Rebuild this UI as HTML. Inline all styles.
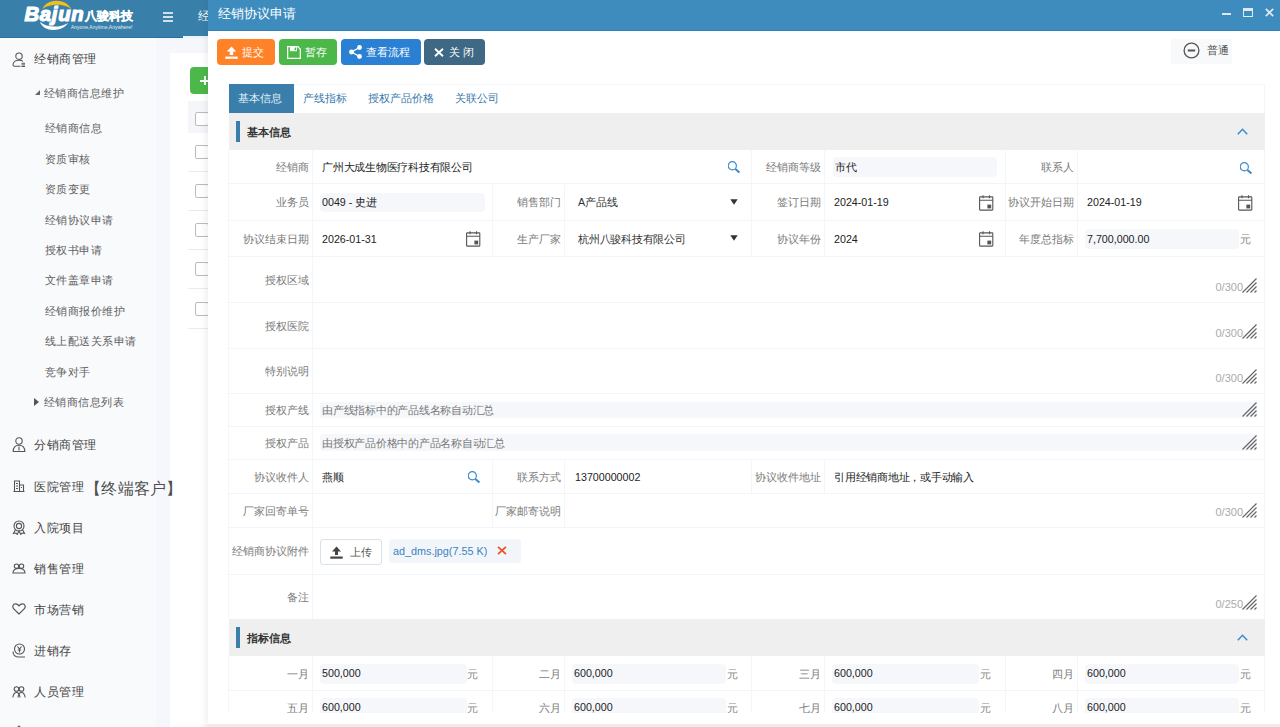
<!DOCTYPE html>
<html><head><meta charset="utf-8">
<style>
*{box-sizing:border-box;margin:0;padding:0}
html,body{width:1280px;height:727px;overflow:hidden}
body{position:relative;background:#f5f7fc;font-family:"Liberation Sans",sans-serif;color:#333}
.a{position:absolute;white-space:nowrap}
#hdr{left:0;top:0;width:1280px;height:38px;background:#3880aa;border-bottom:1px solid #2672a2}
#side{left:0;top:38px;width:156px;height:689px;background:#f9fafc}
.mi{font-size:12px;letter-spacing:.55px;color:#444;line-height:16px}
.si{font-size:11px;letter-spacing:.45px;color:#606060;line-height:14px}
.ic{position:absolute}
#panel{left:170px;top:53px;width:60px;height:680px;background:#fff}
#modal{left:208px;top:0;width:1072px;height:724px;background:#fff;box-shadow:-3px 0 6px rgba(0,0,0,.06)}
#mtitle{left:0;top:0;width:1072px;height:31px;background:#3d8cbd;border-bottom:1px solid #3282b6}
.btn{position:absolute;top:39px;height:26px;border-radius:4px;color:#fff;font-size:11.5px;line-height:26px}
.lbl{position:absolute;margin-top:1px;font-size:11px;color:#7a7a7a;text-align:right;line-height:14px;white-space:nowrap}
.val{position:absolute;margin-top:1px;font-size:10.7px;color:#222;line-height:14px;white-space:nowrap}
.inp{position:absolute;background:#f5f7fb;border-radius:4px}
.hl{position:absolute;height:1px;background:#f1f4f8}
.vl{position:absolute;width:1px;background:#f2f5f9}
.cnt{position:absolute;font-size:11px;color:#aaa;line-height:12px}
</style></head><body>
<div id="hdr" class="a"></div>
<svg class="a" style="left:20px;top:0" width="120" height="36" viewBox="0 0 120 36">
  <path d="M22.3 9.3 C27 -2 46 -2 51.3 9.3 C45 3.2 29 3.2 22.3 9.3Z" fill="#f6bd16"/>
  <path d="M20 21.8 C23 32.5 42 32.5 48.2 23 C40 28 27 28 20 21.8Z" fill="#fff"/>
  <text x="4.5" y="20.6" font-family="Liberation Sans" font-weight="bold" font-style="italic" font-size="20.3" fill="#fff" stroke="#fff" stroke-width="1.2" letter-spacing="0.7">Bajun</text>
  <text x="65.3" y="20" font-family="Liberation Sans" font-weight="bold" font-size="12" fill="#fff" stroke="#fff" stroke-width="0.35">八骏科技</text>
  <text x="51" y="29" font-family="Liberation Sans" font-size="5" fill="#e6eef5">Anyone,Anytime,Anywhere!</text>
</svg>
<div class="a" style="left:163px;top:12px;width:10px;height:2px;background:#d3dfea"></div>
<div class="a" style="left:163px;top:16px;width:10px;height:2px;background:#d3dfea"></div>
<div class="a" style="left:163px;top:20px;width:10px;height:2px;background:#d3dfea"></div>
<div class="a" style="left:198px;top:9px;font-size:12px;line-height:14px;color:#fff">经销商</div>
<div class="a" style="left:183px;top:36px;width:40px;height:2px;background:#eef3f8"></div>
<div id="side" class="a"></div>
<div id="panel" class="a"></div>
<div class="a" style="left:190px;top:67px;width:30px;height:27px;background:#4cb84a;border-radius:4px"></div>
<div class="a" style="left:200px;top:80px;width:10px;height:2px;background:#fff"></div>
<div class="a" style="left:204px;top:76px;width:2px;height:9px;background:#fff"></div>
<div class="a" style="left:188px;top:101px;width:30px;height:32px;background:#f4f6fa"></div>
<div class="a" style="left:195px;top:112px;width:14px;height:14px;border:1px solid #bbb;border-radius:2px;background:#fff"></div>
<div class="a" style="left:188px;top:171px;width:30px;height:1px;background:#e8ebef"></div>
<div class="a" style="left:195px;top:145px;width:14px;height:14px;border:1px solid #bbb;border-radius:2px;background:#fff"></div>
<div class="a" style="left:188px;top:210px;width:30px;height:1px;background:#e8ebef"></div>
<div class="a" style="left:195px;top:184px;width:14px;height:14px;border:1px solid #bbb;border-radius:2px;background:#fff"></div>
<div class="a" style="left:188px;top:249px;width:30px;height:1px;background:#e8ebef"></div>
<div class="a" style="left:195px;top:223px;width:14px;height:14px;border:1px solid #bbb;border-radius:2px;background:#fff"></div>
<div class="a" style="left:188px;top:288px;width:30px;height:1px;background:#e8ebef"></div>
<div class="a" style="left:195px;top:262px;width:14px;height:14px;border:1px solid #bbb;border-radius:2px;background:#fff"></div>
<div class="a" style="left:188px;top:328px;width:30px;height:1px;background:#e8ebef"></div>
<div class="a" style="left:195px;top:302px;width:14px;height:14px;border:1px solid #bbb;border-radius:2px;background:#fff"></div>
<svg class="ic" style="left:12px;top:52px" width="14" height="15" viewBox="0 0 14 15" fill="none" stroke="#555" stroke-width="1.1">
 <circle cx="7" cy="4.2" r="3.2"/><path d="M8.5 14.2H2.5 C1.2 14.2 1 13.5 1 12.8 C1 9.8 3.5 8.2 7 8.2 C8.8 8.2 10 8.6 11 9.4"/><path d="M9.5 11.3h3.5M9.5 12.9h3.5M9.5 14.5h3.5" stroke-width="1"/>
</svg>
<div class="a mi" style="left:34px;top:51px">经销商管理</div>
<div class="a" style="left:35px;top:90px;width:0;height:0;border-left:5px solid transparent;border-bottom:5px solid #666"></div>
<div class="a si" style="left:44px;top:86px">经销商信息维护</div>
<div class="a si" style="left:45px;top:121px">经销商信息</div>
<div class="a si" style="left:45px;top:152px">资质审核</div>
<div class="a si" style="left:45px;top:182px">资质变更</div>
<div class="a si" style="left:45px;top:213px">经销协议申请</div>
<div class="a si" style="left:45px;top:243px">授权书申请</div>
<div class="a si" style="left:45px;top:273px">文件盖章申请</div>
<div class="a si" style="left:45px;top:304px">经销商报价维护</div>
<div class="a si" style="left:45px;top:334px">线上配送关系申请</div>
<div class="a si" style="left:45px;top:365px">竞争对手</div>
<div class="a" style="left:34px;top:398px;width:0;height:0;border-top:4px solid transparent;border-bottom:4px solid transparent;border-left:5px solid #555"></div>
<div class="a si" style="left:44px;top:395px">经销商信息列表</div>
<svg class="ic" style="left:12px;top:437px" width="14" height="15" viewBox="0 0 14 15" fill="none" stroke="#555" stroke-width="1.1">
 <circle cx="7" cy="4" r="3.2"/><path d="M1.2 14.5 C1.2 10 3.5 8.2 7 8.2 C10.5 8.2 12.8 10 12.8 14.5Z"/><path d="M7 9.5v4"/>
</svg>
<div class="a mi" style="left:34px;top:437px">分销商管理</div>
<svg class="ic" style="left:13px;top:480px" width="12" height="12" viewBox="0 0 12 12" fill="none" stroke="#555" stroke-width="1.1">
 <path d="M1.5 11.5V1h5v10.5M6.5 5h4v6.5M0.5 11.5h11M3 3.5h2M3 6h2M3 8.5h2M8 7.5h1"/>
</svg>
<div class="a mi" style="left:34px;top:479px">医院管理</div>
<div class="a" style="left:85px;top:479px;font-size:16px;line-height:20px;color:#505050;letter-spacing:.3px">【终端客户】</div>
<svg class="ic" style="left:12px;top:520px" width="14" height="15" viewBox="0 0 14 15" fill="none" stroke="#555" stroke-width="1.1">
 <circle cx="7" cy="6" r="5"/><circle cx="7" cy="6" r="2.6"/><path d="M3.5 9.5L1.5 13.5l2.5-.5 1.2 1.5L7 11l1.8 3.5 1.2-1.5 2.5.5-2-4"/>
</svg>
<div class="a mi" style="left:34px;top:520px">入院项目</div>
<svg class="ic" style="left:12px;top:563px" width="14" height="11" viewBox="0 0 14 11" fill="none" stroke="#555" stroke-width="1.1">
 <circle cx="4.5" cy="3.2" r="2.2"/><circle cx="9.5" cy="3.2" r="2.2"/><path d="M1 10 C1 6.5 3 5.5 7 5.5 C11 5.5 13 6.5 13 10Z"/>
</svg>
<div class="a mi" style="left:34px;top:561px">销售管理</div>
<svg class="ic" style="left:12px;top:603px" width="14" height="12" viewBox="0 0 14 12" fill="none" stroke="#555" stroke-width="1.2">
 <path d="M7 11 L1.8 5.8 C0 4 0.8 0.8 3.6 0.8 C5.2 0.8 6.3 1.8 7 2.8 C7.7 1.8 8.8 0.8 10.4 0.8 C13.2 0.8 14 4 12.2 5.8Z"/>
</svg>
<div class="a mi" style="left:34px;top:602px">市场营销</div>
<svg class="ic" style="left:12px;top:643px" width="14" height="15" viewBox="0 0 14 15" fill="none" stroke="#555" stroke-width="1.1">
 <circle cx="7.5" cy="6" r="5"/><path d="M5.5 3.5L7.5 6l2-2.5M7.5 6v3.5M5.8 7h3.4M1 8.5 C1 13 4 14 7 14h6"/>
</svg>
<div class="a mi" style="left:34px;top:643px">进销存</div>
<svg class="ic" style="left:12px;top:686px" width="14" height="12" viewBox="0 0 14 12" fill="none" stroke="#555" stroke-width="1.1">
 <circle cx="4.5" cy="3" r="2.3"/><circle cx="9.5" cy="3" r="2.3"/><path d="M0.8 11.5 C1.5 7.5 3 6.5 4.5 6.5 C6 6.5 7.5 7.5 8 11.5M6 11.5 C6.5 7.5 8 6.5 9.5 6.5 C11 6.5 12.5 7.5 13.2 11.5"/>
</svg>
<div class="a mi" style="left:34px;top:684px">人员管理</div>
<div class="a" style="left:17px;top:726px;width:4px;height:4px;background:#666;transform:rotate(45deg)"></div>
<div id="modal" class="a">
  <div id="mtitle" class="a"></div>
  <div class="a" style="left:10px;top:5px;font-size:13px;line-height:18px;color:#fff">经销协议申请</div>
  <div class="a" style="left:1014px;top:13px;width:9px;height:2px;background:#dfe9f2"></div>
  <div class="a" style="left:1035px;top:8px;width:10px;height:9px;border:1.2px solid #dfe9f2;border-top-width:3px"></div>
  <svg class="a" style="left:1057px;top:8px" width="9" height="9" viewBox="0 0 9 9"><path d="M0.8 0.8L8.2 8.2M8.2 0.8L0.8 8.2" stroke="#dfe9f2" stroke-width="1.7"/></svg>
</div>
<div class="a" style="left:208px;top:724px;width:1072px;height:3px;background:#ececec"></div><div class="a" style="left:200px;top:724px;width:8px;height:3px;background:linear-gradient(90deg,rgba(236,236,236,0),#ececec)"></div>
<div class="btn" style="left:217px;width:58px;background:#ff8228"></div>
<svg class="a" style="left:225px;top:46px" width="13" height="13" viewBox="0 0 13 13"><path d="M6.5 0.5L1.8 5.5H4.8V9H8.2V5.5H11.2Z" fill="#fff"/><rect x="0.3" y="10.6" width="12.4" height="2.2" fill="#fff"/></svg>
<div class="a" style="left:242px;top:45px;font-size:11.2px;line-height:14px;color:#fff">提交</div>
<div class="btn" style="left:279px;width:58px;background:#4cb84a"></div>
<svg class="a" style="left:287px;top:46px" width="14" height="13" viewBox="0 0 14 13"><path d="M0.65 0.65H10.8L13.35 3.2V12.35H0.65Z" fill="none" stroke="#fff" stroke-width="1.3"/><path d="M3 0.6H10V5.2H3Z" fill="#fff"/><rect x="7.6" y="1.6" width="1.5" height="2.6" fill="#4cb84a"/></svg>
<div class="a" style="left:305px;top:45px;font-size:11.2px;line-height:14px;color:#fff">暂存</div>
<div class="btn" style="left:341px;width:80px;background:#2a81d3"></div>
<svg class="a" style="left:349px;top:45px" width="13" height="14" viewBox="0 0 13 14"><circle cx="10.5" cy="2.5" r="2.4" fill="#fff"/><circle cx="2.5" cy="7" r="2.4" fill="#fff"/><circle cx="10.5" cy="11.5" r="2.4" fill="#fff"/><path d="M10.5 2.5L2.5 7L10.5 11.5" stroke="#fff" stroke-width="1.4" fill="none"/></svg>
<div class="a" style="left:366px;top:45px;font-size:11px;line-height:14px;color:#fff">查看流程</div>
<div class="btn" style="left:424px;width:61px;background:#3e6883"></div>
<svg class="a" style="left:434px;top:48px" width="10" height="9" viewBox="0 0 10 9"><path d="M1 0.7L9 8.3M9 0.7L1 8.3" stroke="#fff" stroke-width="1.9"/></svg>
<div class="a" style="left:449px;top:45px;font-size:11.2px;line-height:14px;color:#fff">关 闭</div>
<div class="a" style="left:1171px;top:39px;width:61px;height:25px;background:#f8f9fb"></div>
<svg class="a" style="left:1183px;top:42px" width="17" height="17" viewBox="0 0 17 17" fill="none" stroke="#555" stroke-width="1.3"><circle cx="8.5" cy="8.5" r="7.4"/><path d="M4.8 8.5H12.2" stroke-width="2"/></svg>
<div class="a" style="left:1207px;top:43px;font-size:11px;line-height:14px;color:#555">普通</div>
<div class="a" style="left:229px;top:84px;width:1036px;height:29px;border-top:1px solid #f3f5f8;border-right:1px solid #f3f5f8;background:#fff"></div>
<div class="a" style="left:229px;top:84px;width:65px;height:29px;background:#3a7fab"></div>
<div class="a" style="left:238px;top:91px;font-size:11px;line-height:14px;color:#e4eef6">基本信息</div>
<div class="a" style="left:303px;top:91px;font-size:11px;line-height:14px;color:#3879ac">产线指标</div>
<div class="a" style="left:368px;top:91px;font-size:11px;line-height:14px;color:#3879ac">授权产品价格</div>
<div class="a" style="left:455px;top:91px;font-size:11px;line-height:14px;color:#3879ac">关联公司</div>
<div class="a" style="left:0;top:0;width:1280px;height:713px;overflow:hidden"><div class="a" style="left:229px;top:113px;width:1036px;height:37px;background:#efefef"></div>
<div class="a" style="left:236px;top:120.5px;width:4px;height:21px;background:#3a7fab"></div>
<div class="a" style="left:247px;top:125px;font-size:11px;line-height:14px;font-weight:bold;color:#333">基本信息</div>
<svg class="a" style="left:1237px;top:128px" width="11" height="7" viewBox="0 0 11 7"><path d="M0.8 6.2L5.5 1.3L10.2 6.2" stroke="#3a8bd0" stroke-width="1.5" fill="none"/></svg>
<div class="a" style="left:229px;top:619px;width:1036px;height:37px;background:#efefef"></div>
<div class="a" style="left:236px;top:626.5px;width:4px;height:21px;background:#3a7fab"></div>
<div class="a" style="left:247px;top:631px;font-size:11px;line-height:14px;font-weight:bold;color:#333">指标信息</div>
<svg class="a" style="left:1237px;top:634px" width="11" height="7" viewBox="0 0 11 7"><path d="M0.8 6.2L5.5 1.3L10.2 6.2" stroke="#3a8bd0" stroke-width="1.5" fill="none"/></svg>
<div class="hl" style="left:229px;top:183px;width:1035px"></div><div class="hl" style="left:229px;top:220px;width:1035px"></div><div class="hl" style="left:229px;top:256px;width:1035px"></div><div class="hl" style="left:229px;top:302px;width:1035px"></div><div class="hl" style="left:229px;top:348px;width:1035px"></div><div class="hl" style="left:229px;top:393px;width:1035px"></div><div class="hl" style="left:229px;top:426px;width:1035px"></div><div class="hl" style="left:229px;top:459px;width:1035px"></div><div class="hl" style="left:229px;top:493px;width:1035px"></div><div class="hl" style="left:229px;top:527px;width:1035px"></div><div class="hl" style="left:229px;top:574px;width:1035px"></div><div class="vl" style="left:228px;top:150px;height:469px"></div><div class="vl" style="left:1264px;top:150px;height:469px"></div><div class="vl" style="left:312px;top:150px;height:469px"></div><div class="vl" style="left:751px;top:150px;height:106px"></div><div class="vl" style="left:824px;top:150px;height:106px"></div><div class="vl" style="left:1005px;top:150px;height:106px"></div><div class="vl" style="left:1077px;top:150px;height:106px"></div><div class="vl" style="left:492px;top:183px;height:73px"></div><div class="vl" style="left:564px;top:183px;height:73px"></div><div class="vl" style="left:492px;top:459px;height:68px"></div><div class="vl" style="left:564px;top:459px;height:68px"></div><div class="vl" style="left:751px;top:459px;height:34px"></div><div class="vl" style="left:824px;top:459px;height:34px"></div><div class="hl" style="left:229px;top:690px;width:1035px"></div><div class="vl" style="left:228px;top:656px;height:57px"></div><div class="vl" style="left:312px;top:656px;height:57px"></div><div class="vl" style="left:492px;top:656px;height:57px"></div><div class="vl" style="left:564px;top:656px;height:57px"></div><div class="vl" style="left:751px;top:656px;height:57px"></div><div class="vl" style="left:824px;top:656px;height:57px"></div><div class="vl" style="left:1005px;top:656px;height:57px"></div><div class="vl" style="left:1077px;top:656px;height:57px"></div><div class="vl" style="left:1264px;top:656px;height:57px"></div><div class="lbl" style="right:971px;top:150px;line-height:33px">经销商</div><div class="val" style="left:322px;top:150px;line-height:33px;color:#222;letter-spacing:-.25px">广州大成生物医疗科技有限公司</div><svg class="a" style="left:728px;top:161px" width="13" height="13" viewBox="0 0 13 13" fill="none" stroke="#3a8bd0" stroke-width="1.2"><circle cx="4.3" cy="4.8" r="4.1"/><path d="M7.4 7.9L11.4 11.6" stroke-width="2"/></svg><div class="lbl" style="right:459px;top:150px;line-height:33px">经销商等级</div><div class="inp" style="left:833px;top:157px;width:164px;height:20px"></div><div class="val" style="left:835px;top:150px;line-height:33px;color:#222">市代</div><div class="lbl" style="right:206px;top:150px;line-height:33px">联系人</div><svg class="a" style="left:1240px;top:162px" width="13" height="13" viewBox="0 0 13 13" fill="none" stroke="#3a8bd0" stroke-width="1.2"><circle cx="4.3" cy="4.8" r="4.1"/><path d="M7.4 7.9L11.4 11.6" stroke-width="2"/></svg><div class="lbl" style="right:971px;top:183px;line-height:37px">业务员</div><div class="inp" style="left:320px;top:193px;width:165px;height:19px"></div><div class="val" style="left:322px;top:183px;line-height:37px;color:#222">0049 - 史进</div><div class="lbl" style="right:719px;top:183px;line-height:37px">销售部门</div><div class="val" style="left:578px;top:183px;line-height:37px;color:#333">A产品线</div><svg class="a" style="left:730px;top:199px" width="8" height="6" viewBox="0 0 8 6"><path d="M0.3 0.3H7.7L4 5.7Z" fill="#333"/></svg><div class="lbl" style="right:459px;top:183px;line-height:37px">签订日期</div><div class="val" style="left:834px;top:183px;line-height:37px;color:#222">2024-01-19</div><svg class="a" style="left:979px;top:195px" width="15" height="16" viewBox="0 0 15 16" fill="none" stroke="#555" stroke-width="1.1"><rect x="0.6" y="1.9" width="13.2" height="13.2" rx="0.6"/><path d="M0.6 5.2H13.8M4 0.3V3.2M10.5 0.3V3.2"/><rect x="8.4" y="9.6" width="3.8" height="3.8" fill="#555" stroke="none"/></svg><div class="lbl" style="right:206px;top:183px;line-height:37px">协议开始日期</div><div class="val" style="left:1087px;top:183px;line-height:37px;color:#222">2024-01-19</div><svg class="a" style="left:1238px;top:195px" width="15" height="16" viewBox="0 0 15 16" fill="none" stroke="#555" stroke-width="1.1"><rect x="0.6" y="1.9" width="13.2" height="13.2" rx="0.6"/><path d="M0.6 5.2H13.8M4 0.3V3.2M10.5 0.3V3.2"/><rect x="8.4" y="9.6" width="3.8" height="3.8" fill="#555" stroke="none"/></svg><div class="lbl" style="right:971px;top:220px;line-height:36px">协议结束日期</div><div class="val" style="left:322px;top:220px;line-height:36px;color:#222">2026-01-31</div><svg class="a" style="left:466px;top:231px" width="15" height="16" viewBox="0 0 15 16" fill="none" stroke="#555" stroke-width="1.1"><rect x="0.6" y="1.9" width="13.2" height="13.2" rx="0.6"/><path d="M0.6 5.2H13.8M4 0.3V3.2M10.5 0.3V3.2"/><rect x="8.4" y="9.6" width="3.8" height="3.8" fill="#555" stroke="none"/></svg><div class="lbl" style="right:719px;top:220px;line-height:36px">生产厂家</div><div class="val" style="left:578px;top:220px;line-height:36px;color:#333;letter-spacing:-.25px">杭州八骏科技有限公司</div><svg class="a" style="left:730px;top:235px" width="8" height="6" viewBox="0 0 8 6"><path d="M0.3 0.3H7.7L4 5.7Z" fill="#333"/></svg><div class="lbl" style="right:459px;top:220px;line-height:36px">协议年份</div><div class="val" style="left:834px;top:220px;line-height:36px;color:#222">2024</div><svg class="a" style="left:979px;top:231px" width="15" height="16" viewBox="0 0 15 16" fill="none" stroke="#555" stroke-width="1.1"><rect x="0.6" y="1.9" width="13.2" height="13.2" rx="0.6"/><path d="M0.6 5.2H13.8M4 0.3V3.2M10.5 0.3V3.2"/><rect x="8.4" y="9.6" width="3.8" height="3.8" fill="#555" stroke="none"/></svg><div class="lbl" style="right:206px;top:220px;line-height:36px">年度总指标</div><div class="inp" style="left:1085px;top:229px;width:154px;height:20px"></div><div class="val" style="left:1087px;top:220px;line-height:36px;color:#222">7,700,000.00</div><div class="val" style="left:1240px;top:220px;line-height:36px;color:#888">元</div><div class="lbl" style="right:971px;top:256px;line-height:46px">授权区域</div><div class="cnt" style="right:37px;top:281px">0/300</div><svg class="a" style="left:1242px;top:278px" width="15" height="15" viewBox="0 0 15 15" stroke="#666" stroke-width="1.2"><path d="M0.5 14.5L14.5 0.5M4.5 14.5L14.5 4.5M8.5 14.5L14.5 8.5M12.5 14.5L14.5 12.5"/></svg><div class="lbl" style="right:971px;top:302px;line-height:46px">授权医院</div><div class="cnt" style="right:37px;top:327px">0/300</div><svg class="a" style="left:1242px;top:324px" width="15" height="15" viewBox="0 0 15 15" stroke="#666" stroke-width="1.2"><path d="M0.5 14.5L14.5 0.5M4.5 14.5L14.5 4.5M8.5 14.5L14.5 8.5M12.5 14.5L14.5 12.5"/></svg><div class="lbl" style="right:971px;top:348px;line-height:45px">特别说明</div><div class="cnt" style="right:37px;top:372px">0/300</div><svg class="a" style="left:1242px;top:369px" width="15" height="15" viewBox="0 0 15 15" stroke="#666" stroke-width="1.2"><path d="M0.5 14.5L14.5 0.5M4.5 14.5L14.5 4.5M8.5 14.5L14.5 8.5M12.5 14.5L14.5 12.5"/></svg><div class="lbl" style="right:971px;top:393px;line-height:33px">授权产线</div><div class="inp" style="left:320px;top:402px;width:937px;height:16px;border-radius:3px 0 0 3px"></div><div class="val" style="left:322px;top:393px;line-height:33px;color:#777;letter-spacing:-.25px">由产线指标中的产品线名称自动汇总</div><svg class="a" style="left:1242px;top:402px" width="15" height="15" viewBox="0 0 15 15" stroke="#666" stroke-width="1.2"><path d="M0.5 14.5L14.5 0.5M4.5 14.5L14.5 4.5M8.5 14.5L14.5 8.5M12.5 14.5L14.5 12.5"/></svg><div class="lbl" style="right:971px;top:426px;line-height:33px">授权产品</div><div class="inp" style="left:320px;top:434px;width:937px;height:17px;border-radius:3px 0 0 3px"></div><div class="val" style="left:322px;top:426px;line-height:33px;color:#777;letter-spacing:-.25px">由授权产品价格中的产品名称自动汇总</div><svg class="a" style="left:1242px;top:435px" width="15" height="15" viewBox="0 0 15 15" stroke="#666" stroke-width="1.2"><path d="M0.5 14.5L14.5 0.5M4.5 14.5L14.5 4.5M8.5 14.5L14.5 8.5M12.5 14.5L14.5 12.5"/></svg><div class="lbl" style="right:971px;top:459px;line-height:34px">协议收件人</div><div class="val" style="left:322px;top:459px;line-height:34px;color:#222">燕顺</div><svg class="a" style="left:468px;top:471px" width="13" height="13" viewBox="0 0 13 13" fill="none" stroke="#3a8bd0" stroke-width="1.2"><circle cx="4.3" cy="4.8" r="4.1"/><path d="M7.4 7.9L11.4 11.6" stroke-width="2"/></svg><div class="lbl" style="right:719px;top:459px;line-height:34px">联系方式</div><div class="val" style="left:575px;top:459px;line-height:34px;color:#222">13700000002</div><div class="lbl" style="right:459px;top:459px;line-height:34px">协议收件地址</div><div class="val" style="left:834px;top:459px;line-height:34px;color:#222;letter-spacing:-.25px">引用经销商地址，或手动输入</div><div class="lbl" style="right:971px;top:493px;line-height:34px">厂家回寄单号</div><div class="lbl" style="right:719px;top:493px;line-height:34px">厂家邮寄说明</div><div class="cnt" style="right:37px;top:506px">0/300</div><svg class="a" style="left:1242px;top:503px" width="15" height="15" viewBox="0 0 15 15" stroke="#666" stroke-width="1.2"><path d="M0.5 14.5L14.5 0.5M4.5 14.5L14.5 4.5M8.5 14.5L14.5 8.5M12.5 14.5L14.5 12.5"/></svg><div class="lbl" style="right:971px;top:527px;line-height:47px">经销商协议附件</div><div class="a" style="left:320px;top:539px;width:62px;height:26px;border:1px solid #d8e0ea;border-radius:3px;background:#fff"></div>
<svg class="a" style="left:330px;top:546px" width="13" height="13" viewBox="0 0 13 13"><path d="M6.5 0.5L2 5.5H5V9H8V5.5H11Z" fill="#444"/><rect x="0.3" y="10.5" width="12.4" height="2.2" fill="#444"/></svg>
<div class="a" style="left:350px;top:545px;font-size:11px;line-height:14px;color:#555">上传</div>
<div class="a" style="left:389px;top:539px;width:132px;height:24px;background:#f2f6fa;border-radius:3px"></div>
<div class="a" style="left:393px;top:544px;font-size:10.8px;line-height:14px;color:#3b83c0">ad_dms.jpg(7.55 K)</div>
<svg class="a" style="left:497px;top:546px" width="10" height="9" viewBox="0 0 10 9"><path d="M1 0.8L9 8.2M9 0.8L1 8.2" stroke="#f0522c" stroke-width="1.8"/></svg>
<div class="lbl" style="right:971px;top:574px;line-height:45px">备注</div><div class="cnt" style="right:37px;top:598px">0/250</div><svg class="a" style="left:1242px;top:595px" width="15" height="15" viewBox="0 0 15 15" stroke="#666" stroke-width="1.2"><path d="M0.5 14.5L14.5 0.5M4.5 14.5L14.5 4.5M8.5 14.5L14.5 8.5M12.5 14.5L14.5 12.5"/></svg><div class="lbl" style="right:971px;top:656px;line-height:34px">一月</div><div class="inp" style="left:320px;top:664px;width:147px;height:20px"></div><div class="val" style="left:322px;top:656px;line-height:34px;color:#222;margin-top:0">500,000</div><div class="val" style="left:467px;top:656px;line-height:34px;color:#888">元</div><div class="lbl" style="right:719px;top:656px;line-height:34px">二月</div><div class="inp" style="left:572px;top:664px;width:154px;height:20px"></div><div class="val" style="left:574px;top:656px;line-height:34px;color:#222;margin-top:0">600,000</div><div class="val" style="left:727px;top:656px;line-height:34px;color:#888">元</div><div class="lbl" style="right:459px;top:656px;line-height:34px">三月</div><div class="inp" style="left:832px;top:664px;width:147px;height:20px"></div><div class="val" style="left:834px;top:656px;line-height:34px;color:#222;margin-top:0">600,000</div><div class="val" style="left:980px;top:656px;line-height:34px;color:#888">元</div><div class="lbl" style="right:206px;top:656px;line-height:34px">四月</div><div class="inp" style="left:1085px;top:664px;width:154px;height:20px"></div><div class="val" style="left:1087px;top:656px;line-height:34px;color:#222;margin-top:0">600,000</div><div class="val" style="left:1240px;top:656px;line-height:34px;color:#888">元</div><div class="lbl" style="right:971px;top:690px;line-height:34px">五月</div><div class="inp" style="left:320px;top:698px;width:147px;height:20px"></div><div class="val" style="left:322px;top:690px;line-height:34px;color:#222;margin-top:0">600,000</div><div class="val" style="left:467px;top:690px;line-height:34px;color:#888">元</div><div class="lbl" style="right:719px;top:690px;line-height:34px">六月</div><div class="inp" style="left:572px;top:698px;width:154px;height:20px"></div><div class="val" style="left:574px;top:690px;line-height:34px;color:#222;margin-top:0">600,000</div><div class="val" style="left:727px;top:690px;line-height:34px;color:#888">元</div><div class="lbl" style="right:459px;top:690px;line-height:34px">七月</div><div class="inp" style="left:832px;top:698px;width:147px;height:20px"></div><div class="val" style="left:834px;top:690px;line-height:34px;color:#222;margin-top:0">600,000</div><div class="val" style="left:980px;top:690px;line-height:34px;color:#888">元</div><div class="lbl" style="right:206px;top:690px;line-height:34px">八月</div><div class="inp" style="left:1085px;top:698px;width:154px;height:20px"></div><div class="val" style="left:1087px;top:690px;line-height:34px;color:#222;margin-top:0">600,000</div><div class="val" style="left:1240px;top:690px;line-height:34px;color:#888">元</div></div>
</body></html>
